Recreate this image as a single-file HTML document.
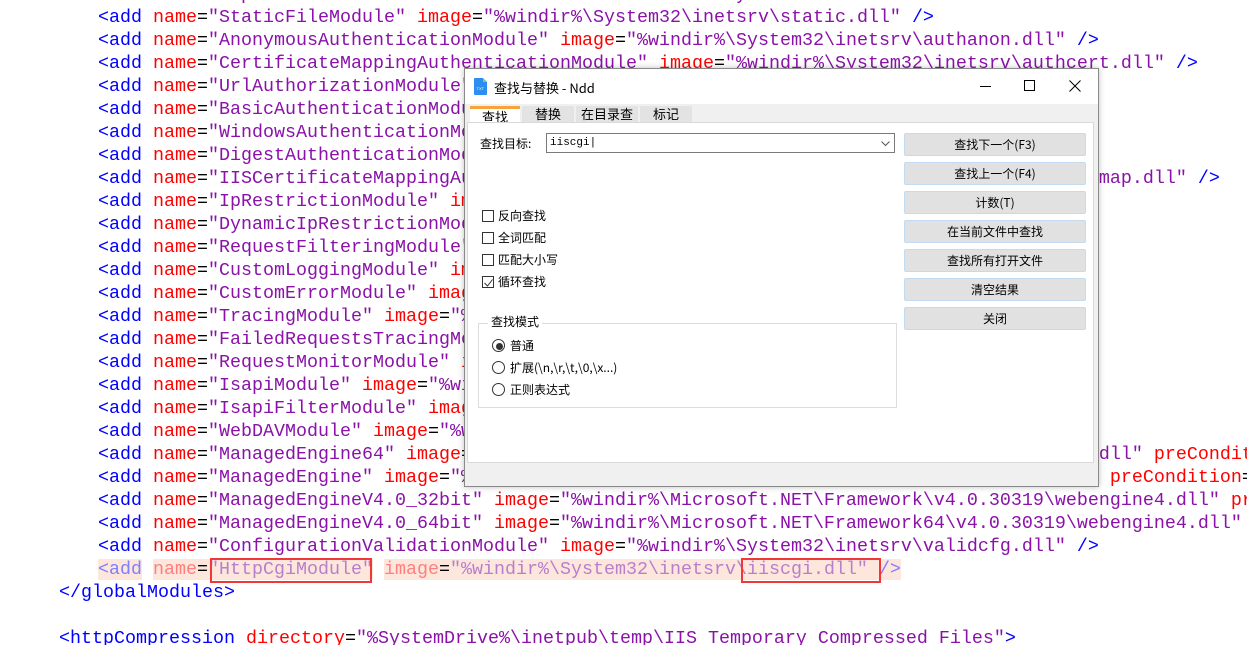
<!DOCTYPE html>
<html><head><meta charset="utf-8"><style>
*{margin:0;padding:0;box-sizing:border-box}
html,body{width:1247px;height:645px;overflow:hidden}
body{background:#fff;position:relative;font-family:"Liberation Mono",monospace}
#wrap{position:absolute;left:0;top:0;width:1247px;height:645px;overflow:hidden}
.code{position:absolute;left:98px;top:6px;font-size:18.33px;line-height:23px;color:#000;width:1149px;overflow:hidden}
.l{height:23px;white-space:pre}
.b{color:#0000ff}.r{color:#ff0000}.p{color:#8a12a8}
.hl span.t{background:#fde6dc}
.hl .b{color:#7f7fff}.hl .r{color:#ff7f7f}.hl .p{color:#b87fcc}
.box{position:absolute;border:2px solid #f03838}
.dlg{position:absolute;left:464px;top:68px;width:635px;height:419px;background:#f0f0f0;border:1px solid #8a8a8a;font-family:"Noto Sans CJK SC","Liberation Sans",sans-serif;font-size:12px;color:#000;box-shadow:0 0 6px rgba(0,0,0,.25)}
.title{position:absolute;left:0;top:0;width:633px;height:35px;background:#fff}
.tab{position:absolute;top:37px;height:16px;background:#e3e3e3;text-align:center;font-size:13px;line-height:16px}
.panel{position:absolute;left:2px;top:53px;width:627px;height:341px;background:#fff;border:1px solid #d9d9d9}
.btn{position:absolute;left:436px;width:182px;height:23px;background:#e1e1e1;border:1px solid #c3dbf0;border-radius:2px;text-align:center;line-height:21px;font-size:12px}
.cb{position:absolute;left:14px;width:12px;height:12px;border:1px solid #333;background:#fff}
.lbl{position:absolute;font-size:12px;line-height:14px}
.rd{position:absolute;left:24px;width:13px;height:13px;border:1px solid #333;border-radius:50%;background:#fff}
</style></head><body><div id="wrap">
<div class="code" style="top:-17px"><div class="l"><span class="p">             p                                            y</span></div></div>
<div class="code">
<div class="l"><span class="b">&lt;add</span> <span class="r">name</span>=<span class="p">"StaticFileModule"</span> <span class="r">image</span>=<span class="p">"%windir%\System32\inetsrv\static.dll"</span> <span class="b">/&gt;</span></div>
<div class="l"><span class="b">&lt;add</span> <span class="r">name</span>=<span class="p">"AnonymousAuthenticationModule"</span> <span class="r">image</span>=<span class="p">"%windir%\System32\inetsrv\authanon.dll"</span> <span class="b">/&gt;</span></div>
<div class="l"><span class="b">&lt;add</span> <span class="r">name</span>=<span class="p">"CertificateMappingAuthenticationModule"</span> <span class="r">image</span>=<span class="p">"%windir%\System32\inetsrv\authcert.dll"</span> <span class="b">/&gt;</span></div>
<div class="l"><span class="b">&lt;add</span> <span class="r">name</span>=<span class="p">"UrlAuthorizationModule"</span> <span class="r">image</span>=<span class="p">"%windir%\System32\inetsrv\urlauthz.dll"</span> <span class="b">/&gt;</span></div>
<div class="l"><span class="b">&lt;add</span> <span class="r">name</span>=<span class="p">"BasicAuthenticationModule"</span> <span class="r">image</span>=<span class="p">"%windir%\System32\inetsrv\authbas.dll"</span> <span class="b">/&gt;</span></div>
<div class="l"><span class="b">&lt;add</span> <span class="r">name</span>=<span class="p">"WindowsAuthenticationModule"</span> <span class="r">image</span>=<span class="p">"%windir%\System32\inetsrv\authsspi.dll"</span> <span class="b">/&gt;</span></div>
<div class="l"><span class="b">&lt;add</span> <span class="r">name</span>=<span class="p">"DigestAuthenticationModule"</span> <span class="r">image</span>=<span class="p">"%windir%\System32\inetsrv\authmd5.dll"</span> <span class="b">/&gt;</span></div>
<div class="l"><span class="b">&lt;add</span> <span class="r">name</span>=<span class="p">"IISCertificateMappingAuthenticationModule"</span> <span class="r">image</span>=<span class="p">"%windir%\System32\inetsrv\authmap.dll"</span> <span class="b">/&gt;</span></div>
<div class="l"><span class="b">&lt;add</span> <span class="r">name</span>=<span class="p">"IpRestrictionModule"</span> <span class="r">image</span>=<span class="p">"%windir%\System32\inetsrv\iprestr.dll"</span> <span class="b">/&gt;</span></div>
<div class="l"><span class="b">&lt;add</span> <span class="r">name</span>=<span class="p">"DynamicIpRestrictionModule"</span> <span class="r">image</span>=<span class="p">"%windir%\System32\inetsrv\diprestr.dll"</span> <span class="b">/&gt;</span></div>
<div class="l"><span class="b">&lt;add</span> <span class="r">name</span>=<span class="p">"RequestFilteringModule"</span> <span class="r">image</span>=<span class="p">"%windir%\System32\inetsrv\modrqflt.dll"</span> <span class="b">/&gt;</span></div>
<div class="l"><span class="b">&lt;add</span> <span class="r">name</span>=<span class="p">"CustomLoggingModule"</span> <span class="r">image</span>=<span class="p">"%windir%\System32\inetsrv\logcust.dll"</span> <span class="b">/&gt;</span></div>
<div class="l"><span class="b">&lt;add</span> <span class="r">name</span>=<span class="p">"CustomErrorModule"</span> <span class="r">image</span>=<span class="p">"%windir%\System32\inetsrv\custerr.dll"</span> <span class="b">/&gt;</span></div>
<div class="l"><span class="b">&lt;add</span> <span class="r">name</span>=<span class="p">"TracingModule"</span> <span class="r">image</span>=<span class="p">"%windir%\System32\inetsrv\iisetw.dll"</span> <span class="b">/&gt;</span></div>
<div class="l"><span class="b">&lt;add</span> <span class="r">name</span>=<span class="p">"FailedRequestsTracingModule"</span> <span class="r">image</span>=<span class="p">"%windir%\System32\inetsrv\iisfreb.dll"</span> <span class="b">/&gt;</span></div>
<div class="l"><span class="b">&lt;add</span> <span class="r">name</span>=<span class="p">"RequestMonitorModule"</span> <span class="r">image</span>=<span class="p">"%windir%\System32\inetsrv\iisreqs.dll"</span> <span class="b">/&gt;</span></div>
<div class="l"><span class="b">&lt;add</span> <span class="r">name</span>=<span class="p">"IsapiModule"</span> <span class="r">image</span>=<span class="p">"%windir%\System32\inetsrv\isapi.dll"</span> <span class="b">/&gt;</span></div>
<div class="l"><span class="b">&lt;add</span> <span class="r">name</span>=<span class="p">"IsapiFilterModule"</span> <span class="r">image</span>=<span class="p">"%windir%\System32\inetsrv\filter.dll"</span> <span class="b">/&gt;</span></div>
<div class="l"><span class="b">&lt;add</span> <span class="r">name</span>=<span class="p">"WebDAVModule"</span> <span class="r">image</span>=<span class="p">"%windir%\System32\inetsrv\webdav.dll"</span> <span class="b">/&gt;</span></div>
<div class="l"><span class="b">&lt;add</span> <span class="r">name</span>=<span class="p">"ManagedEngine64"</span> <span class="r">image</span>=<span class="p">"%windir%\Microsoft.NET\Framework64\v2.0.50727\webengine.dll"</span> <span class="r">preCondition</span>=<span class="p">"x"</span></div>
<div class="l"><span class="b">&lt;add</span> <span class="r">name</span>=<span class="p">"ManagedEngine"</span> <span class="r">image</span>=<span class="p">"%windir%\Microsoft.NET\Framework\v2.0.50727\webengine.dll"</span> <span class="r">preCondition</span>=<span class="p">"x"</span></div>
<div class="l"><span class="b">&lt;add</span> <span class="r">name</span>=<span class="p">"ManagedEngineV4.0_32bit"</span> <span class="r">image</span>=<span class="p">"%windir%\Microsoft.NET\Framework\v4.0.30319\webengine4.dll"</span> <span class="r">preCondition</span>=<span class="p">"x"</span></div>
<div class="l"><span class="b">&lt;add</span> <span class="r">name</span>=<span class="p">"ManagedEngineV4.0_64bit"</span> <span class="r">image</span>=<span class="p">"%windir%\Microsoft.NET\Framework64\v4.0.30319\webengine4.dll"</span> <span class="r">preCondition</span>=<span class="p">"x"</span></div>
<div class="l"><span class="b">&lt;add</span> <span class="r">name</span>=<span class="p">"ConfigurationValidationModule"</span> <span class="r">image</span>=<span class="p">"%windir%\System32\inetsrv\validcfg.dll"</span> <span class="b">/&gt;</span></div>
<div class="l hl"><span class="t"><span class="b">&lt;add</span></span> <span class="t"><span class="r">name</span>=<span class="p">"HttpCgiModule"</span></span> <span class="t"><span class="r">image</span>=<span class="p">"%windir%\System32\inetsrv\iiscgi.dll"</span> <span class="b">/&gt;</span></span></div>
</div>
<div class="code" style="left:59px;top:581px;width:1188px">
<div class="l"><span class="b">&lt;/globalModules&gt;</span></div>
<div class="l"> </div>
<div class="l"><span class="b">&lt;httpCompression</span> <span class="r">directory</span>=<span class="p">"%SystemDrive%\inetpub\temp\IIS Temporary Compressed Files"</span><span class="b">&gt;</span></div>
</div>
<div class="box" style="left:210px;top:558px;width:162px;height:25px"></div>
<div class="box" style="left:741px;top:558px;width:140px;height:25px"></div>

<div class="dlg">
 <div class="title">
  <svg style="position:absolute;left:9px;top:9px" width="13" height="17" viewBox="0 0 13 17"><path d="M1 0H9L13 4V16a1 1 0 0 1-1 1H1a1 1 0 0 1-1-1V1a1 1 0 0 1 1-1z" fill="#2b8ef0"/><path d="M9 0L13 4H9z" fill="#7ad06a"/><text x="2.5" y="12" font-size="4" fill="#fff" font-family="Liberation Sans">TXT</text></svg>
  <div style="position:absolute;left:29px;top:9px;font-size:13px">查找与替换 - Ndd</div>
  <div style="position:absolute;left:515px;top:17px;width:11px;height:1px;background:#000"></div>
  <div style="position:absolute;left:559px;top:11px;width:11px;height:11px;border:1px solid #000"></div>
  <svg style="position:absolute;left:604px;top:11px" width="12" height="12"><path d="M0.5 0.5L11.5 11.5M11.5 0.5L0.5 11.5" stroke="#000" stroke-width="1"/></svg>
 </div>
 <div class="tab" style="left:5px;width:50px;background:#fff;border-top:3px solid #f5a33a;line-height:15px;height:17px">查找</div>
 <div class="tab" style="left:57px;width:52px">替换</div>
 <div class="tab" style="left:111px;width:62px">在目录查找</div>
 <div class="tab" style="left:175px;width:52px">标记</div>
 <div class="panel">
  <div class="lbl" style="left:12px;top:14px">查找目标:</div>
  <div style="position:absolute;left:78px;top:10px;width:349px;height:20px;border:1px solid #7a7a7a;background:#fff;font-family:'Liberation Mono',monospace;font-size:11px;line-height:18px;padding-left:3px">iiscgi|</div>
  <svg style="position:absolute;left:413px;top:18px" width="9" height="6"><path d="M0.5 0.5L4.5 4.5L8.5 0.5" stroke="#555" fill="none"/></svg>
  <div class="btn" style="top:10px">查找下一个(F3)</div>
  <div class="btn" style="top:39px">查找上一个(F4)</div>
  <div class="btn" style="top:68px">计数(T)</div>
  <div class="btn" style="top:97px">在当前文件中查找</div>
  <div class="btn" style="top:126px">查找所有打开文件</div>
  <div class="btn" style="top:155px">清空结果</div>
  <div class="btn" style="top:184px">关闭</div>
  <div class="cb" style="top:87px"></div><div class="lbl" style="left:30px;top:86px">反向查找</div>
  <div class="cb" style="top:109px"></div><div class="lbl" style="left:30px;top:108px">全词匹配</div>
  <div class="cb" style="top:131px"></div><div class="lbl" style="left:30px;top:130px">匹配大小写</div>
  <div class="cb" style="top:153px"></div><svg style="position:absolute;left:16px;top:156px" width="9" height="8"><path d="M0.5 4L3.5 7L8.5 0.5" stroke="#333" fill="none"/></svg><div class="lbl" style="left:30px;top:152px">循环查找</div>
  <div style="position:absolute;left:10px;top:200px;width:419px;height:85px;border:1px solid #dcdcdc"></div>
  <div class="lbl" style="left:20px;top:192px;background:#fff;padding:0 3px">查找模式</div>
  <div class="rd" style="top:216px"></div><div style="position:absolute;left:28px;top:220px;width:7px;height:7px;border-radius:50%;background:#333"></div><div class="lbl" style="left:42px;top:216px">普通</div>
  <div class="rd" style="top:238px"></div><div class="lbl" style="left:42px;top:238px">扩展(\n,\r,\t,\0,\x...)</div>
  <div class="rd" style="top:260px"></div><div class="lbl" style="left:42px;top:260px">正则表达式</div>
 </div>
</div>
</div></body></html>
